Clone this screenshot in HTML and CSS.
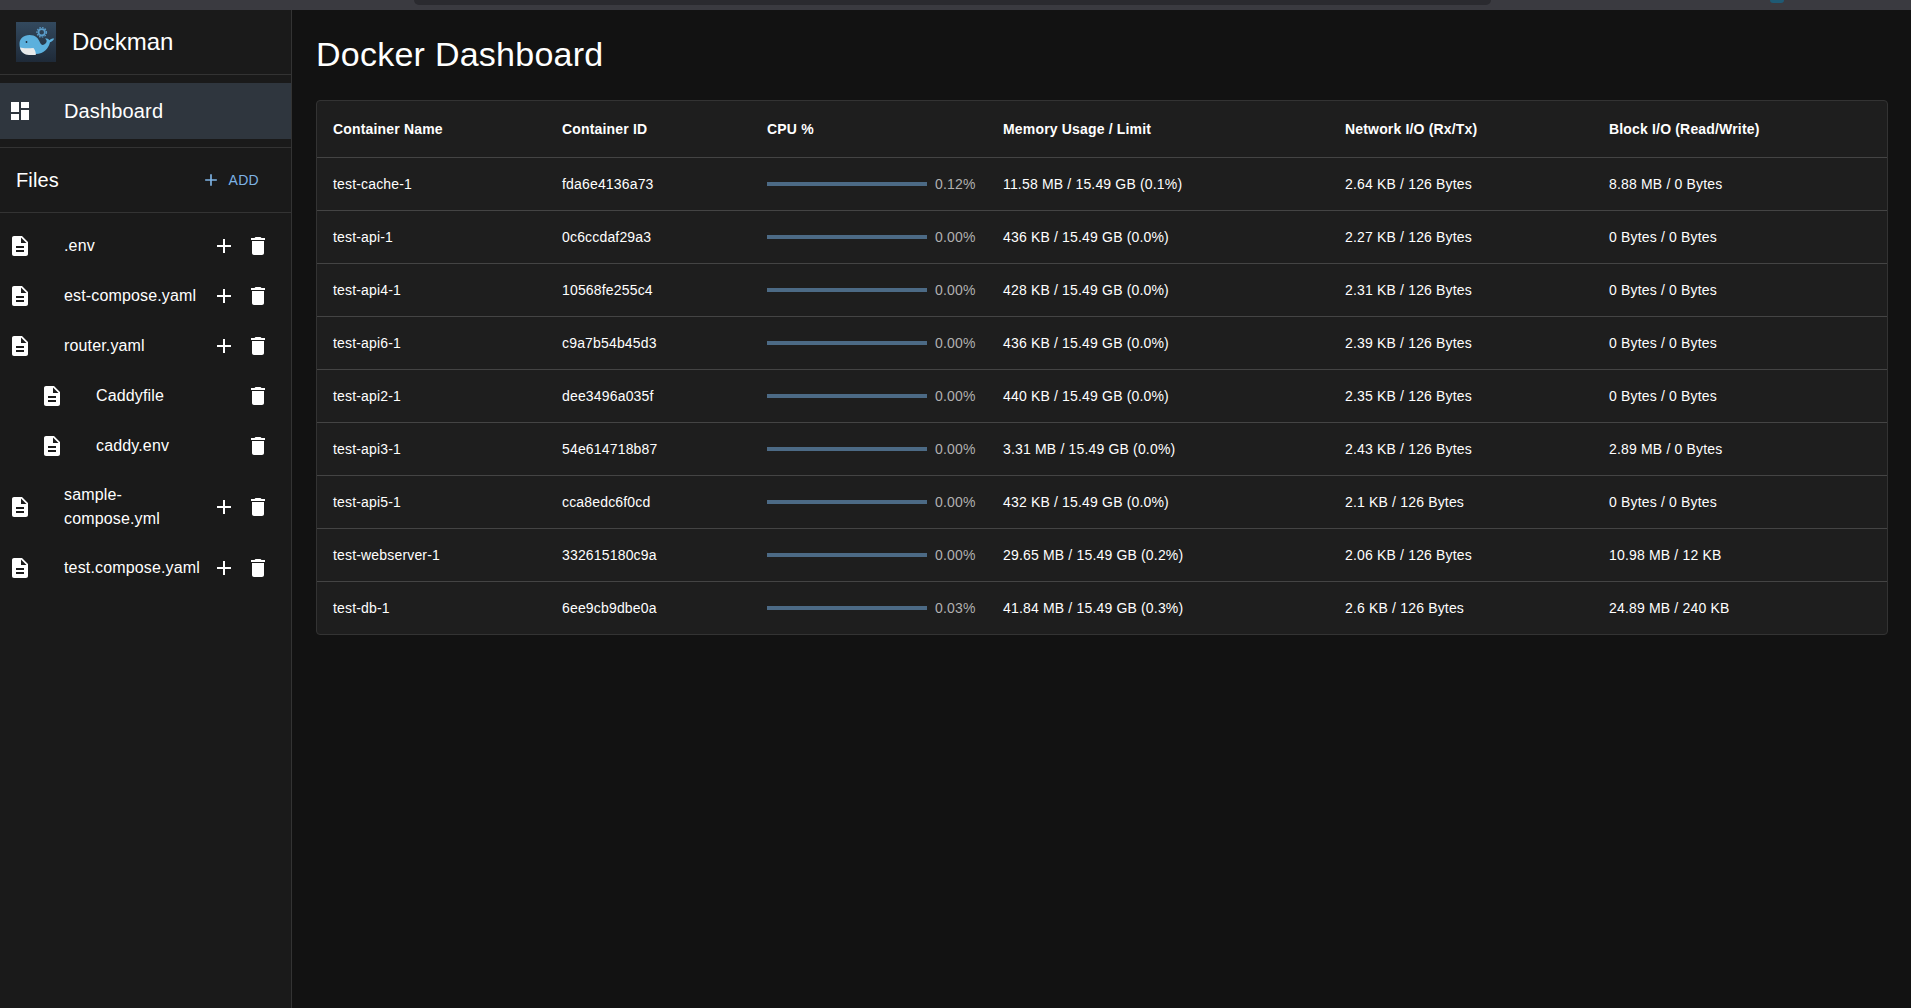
FILE: index.html
```html
<!DOCTYPE html>
<html lang="en">
<head>
<meta charset="utf-8">
<title>Dockman</title>
<link rel="stylesheet" href="styles.css">
</head>
<body>
<svg class="sprite" aria-hidden="true">
  <symbol id="i-dash" viewBox="0 0 24 24"><path d="M3 13h8V3H3v10zm0 8h8v-6H3v6zm10 0h8V11h-8v10zm0-18v6h8V3h-8z"/></symbol>
  <symbol id="i-file" viewBox="0 0 24 24"><path d="M14 2H6c-1.1 0-1.99.9-1.99 2L4 20c0 1.1.89 2 1.99 2H18c1.1 0 2-.9 2-2V8l-6-6zm2 16H8v-2h8v2zm0-4H8v-2h8v2zm-3-5V3.5L18.5 9H13z"/></symbol>
  <symbol id="i-add" viewBox="0 0 24 24"><path d="M19 13h-6v6h-2v-6H5v-2h6V5h2v6h6v2z"/></symbol>
  <symbol id="i-del" viewBox="0 0 24 24"><path d="M6 19c0 1.1.9 2 2 2h8c1.1 0 2-.9 2-2V7H6v12zM19 4h-3.5l-1-1h-5l-1 1H5v2h14V4z"/></symbol>
</svg>
<div class="browser-strip"><div class="browser-bar"></div><div class="browser-dot"></div></div>
<div class="app">
  <aside class="sidebar">
    <div class="brand">
      <svg class="logo" viewBox="0 0 40 40">
        <defs><linearGradient id="lg" x1="0" y1="0" x2="0" y2="1"><stop offset="0" stop-color="#33495e"/><stop offset="1" stop-color="#1f2a38"/></linearGradient></defs>
        <rect width="40" height="40" fill="url(#lg)"/>
        <g fill="none" stroke="#5a9cc9"><circle cx="25.7" cy="10.3" r="3.2" stroke-width="1.8"/><circle cx="25.7" cy="10.3" r="4.8" stroke-width="1.2" stroke-dasharray="1.6 1.2"/></g>
        <path d="M3.5 22c0-5.5 4-9 10-9 6 0 9 3.5 10.5 7.5 1.2 3 3.5 3 5.5 1 .8-.8 1.2-1.8 1.2-2.8l-1.5-2.4c2 .2 3.5.8 4.3 1.9.8-1 2.3-1.6 4.7-1.6-1 2.2-2.5 3.2-4.2 3.6-1.5 5.8-5.5 11.8-14.5 11.8H13C7.5 33 3.5 29 3.5 22z" fill="#5cb0dd"/>
        <path d="M4 25.5c3 1 9.3.8 13.5.4 1.5 2 2.5 4.5 2.3 7.1H13c-4.5 0-8-2.8-9-7.5z" fill="#e9eaea"/>
        <circle cx="10.5" cy="20" r=".9" fill="#1f2a38"/>
      </svg>
      <span class="brand-name">Dockman</span>
    </div>
    <div class="nav">
      <a class="nav-item"><svg class="icon"><use href="#i-dash"/></svg><span>Dashboard</span></a>
    </div>
    <div class="files-head">
      <span class="files-title">Files</span>
      <button class="add-btn"><svg class="icon-sm"><use href="#i-add"/></svg><span>ADD</span></button>
    </div>
    <ul class="file-list">
      <li class="file"><svg class="icon"><use href="#i-file"/></svg><span class="file-name">.env</span><span class="actions"><span class="act"><svg class="icon"><use href="#i-add"/></svg></span><span class="act"><svg class="icon"><use href="#i-del"/></svg></span></span></li>
      <li class="file"><svg class="icon"><use href="#i-file"/></svg><span class="file-name">est-compose.yaml</span><span class="actions"><span class="act"><svg class="icon"><use href="#i-add"/></svg></span><span class="act"><svg class="icon"><use href="#i-del"/></svg></span></span></li>
      <li class="file"><svg class="icon"><use href="#i-file"/></svg><span class="file-name">router.yaml</span><span class="actions"><span class="act"><svg class="icon"><use href="#i-add"/></svg></span><span class="act"><svg class="icon"><use href="#i-del"/></svg></span></span></li>
      <li class="file nested"><svg class="icon"><use href="#i-file"/></svg><span class="file-name">Caddyfile</span><span class="actions"><span class="act"><svg class="icon"><use href="#i-del"/></svg></span></span></li>
      <li class="file nested"><svg class="icon"><use href="#i-file"/></svg><span class="file-name">caddy.env</span><span class="actions"><span class="act"><svg class="icon"><use href="#i-del"/></svg></span></span></li>
      <li class="file"><svg class="icon"><use href="#i-file"/></svg><span class="file-name">sample-compose.yml</span><span class="actions"><span class="act"><svg class="icon"><use href="#i-add"/></svg></span><span class="act"><svg class="icon"><use href="#i-del"/></svg></span></span></li>
      <li class="file"><svg class="icon"><use href="#i-file"/></svg><span class="file-name">test.compose.yaml</span><span class="actions"><span class="act"><svg class="icon"><use href="#i-add"/></svg></span><span class="act"><svg class="icon"><use href="#i-del"/></svg></span></span></li>
    </ul>
  </aside>
  <main class="main">
    <h1 class="title">Docker Dashboard</h1>
    <div class="table-wrap">
      <table class="stats">
        <colgroup><col class="c1"><col class="c2"><col class="c3"><col class="c4"><col class="c5"><col class="c6"></colgroup>
        <thead><tr><th>Container Name</th><th>Container ID</th><th>CPU %</th><th>Memory Usage / Limit</th><th>Network I/O (Rx/Tx)</th><th>Block I/O (Read/Write)</th></tr></thead>
        <tbody>
          <tr><td>test-cache-1</td><td>fda6e4136a73</td><td><div class="cpu"><div class="bar"></div><span class="pct">0.12%</span></div></td><td>11.58 MB / 15.49 GB (0.1%)</td><td>2.64 KB / 126 Bytes</td><td>8.88 MB / 0 Bytes</td></tr>
          <tr><td>test-api-1</td><td>0c6ccdaf29a3</td><td><div class="cpu"><div class="bar"></div><span class="pct">0.00%</span></div></td><td>436 KB / 15.49 GB (0.0%)</td><td>2.27 KB / 126 Bytes</td><td>0 Bytes / 0 Bytes</td></tr>
          <tr><td>test-api4-1</td><td>10568fe255c4</td><td><div class="cpu"><div class="bar"></div><span class="pct">0.00%</span></div></td><td>428 KB / 15.49 GB (0.0%)</td><td>2.31 KB / 126 Bytes</td><td>0 Bytes / 0 Bytes</td></tr>
          <tr><td>test-api6-1</td><td>c9a7b54b45d3</td><td><div class="cpu"><div class="bar"></div><span class="pct">0.00%</span></div></td><td>436 KB / 15.49 GB (0.0%)</td><td>2.39 KB / 126 Bytes</td><td>0 Bytes / 0 Bytes</td></tr>
          <tr><td>test-api2-1</td><td>dee3496a035f</td><td><div class="cpu"><div class="bar"></div><span class="pct">0.00%</span></div></td><td>440 KB / 15.49 GB (0.0%)</td><td>2.35 KB / 126 Bytes</td><td>0 Bytes / 0 Bytes</td></tr>
          <tr><td>test-api3-1</td><td>54e614718b87</td><td><div class="cpu"><div class="bar"></div><span class="pct">0.00%</span></div></td><td>3.31 MB / 15.49 GB (0.0%)</td><td>2.43 KB / 126 Bytes</td><td>2.89 MB / 0 Bytes</td></tr>
          <tr><td>test-api5-1</td><td>cca8edc6f0cd</td><td><div class="cpu"><div class="bar"></div><span class="pct">0.00%</span></div></td><td>432 KB / 15.49 GB (0.0%)</td><td>2.1 KB / 126 Bytes</td><td>0 Bytes / 0 Bytes</td></tr>
          <tr><td>test-webserver-1</td><td>332615180c9a</td><td><div class="cpu"><div class="bar"></div><span class="pct">0.00%</span></div></td><td>29.65 MB / 15.49 GB (0.2%)</td><td>2.06 KB / 126 Bytes</td><td>10.98 MB / 12 KB</td></tr>
          <tr><td>test-db-1</td><td>6ee9cb9dbe0a</td><td><div class="cpu"><div class="bar"></div><span class="pct">0.03%</span></div></td><td>41.84 MB / 15.49 GB (0.3%)</td><td>2.6 KB / 126 Bytes</td><td>24.89 MB / 240 KB</td></tr>
        </tbody>
      </table>
    </div>
  </main>
</div>
</body>
</html>
```

FILE: styles.css
```css
* { box-sizing: border-box; }
html, body { height: 100%; }
body {
  margin: 0;
  background: #121212;
  color: #fff;
  font-family: "Liberation Sans", Arial, sans-serif;
  font-size: 16px;
  line-height: 1.5;
  letter-spacing: 0.15px;
  overflow: hidden;
  display: flex;
  flex-direction: column;
}
.sprite { display: none; }
.browser-strip {
  flex: 0 0 10px;
  background: #3a3a40;
  display: flex;
  padding: 0 127px 0 414px;
  gap: 279px;
}
.browser-bar {
  flex: 1;
  height: 5px;
  background: #2a2a2f;
  border-radius: 0 0 8px 8px;
}
.browser-dot { width: 14px; height: 3px; background: #1f5a74; border-radius: 0 0 5px 5px; }
.app { flex: 1; display: flex; min-height: 0; }
.sidebar {
  flex: 0 0 292px;
  background: #1a1a1a;
  border-right: 1px solid #333;
  display: flex;
  flex-direction: column;
}
.brand {
  height: 65px;
  padding: 0 16px;
  display: flex;
  align-items: center;
  gap: 16px;
  border-bottom: 1px solid #333;
}
.logo { width: 40px; height: 40px; flex: none; }
.brand-name { font-size: 24px; line-height: 1.2; letter-spacing: 0; }
.nav { padding: 8px 0; border-bottom: 1px solid #333; }
.nav-item {
  height: 56px;
  padding-left: 8px;
  display: flex;
  align-items: center;
  gap: 32px;
  background: #2f363e;
  font-size: 20px;
}
.icon { width: 24px; height: 24px; fill: #fff; flex: none; display: block; }
.icon-sm { width: 20px; height: 20px; fill: currentColor; display: block; }
.files-head {
  height: 65px;
  padding: 0 16px;
  display: flex;
  align-items: center;
  justify-content: space-between;
  border-bottom: 1px solid #333;
}
.files-title { font-size: 20px; }
.add-btn {
  border: 0;
  background: none;
  color: #7eb3e4;
  font: 14px "Liberation Sans", Arial, sans-serif;
  letter-spacing: 0.3px;
  display: flex;
  align-items: center;
  gap: 8px;
  padding: 0 16px 0 8px;
}
.file-list { list-style: none; margin: 0; padding: 8px 0; }
.file {
  display: flex;
  align-items: center;
  padding: 8px 16px 8px 8px;
}
.file.nested { padding-left: 40px; }
.file-name { flex: 1; min-width: 0; margin: 4px 0 4px 32px; }
.actions { display: flex; flex: none; }
.act { width: 34px; height: 34px; padding: 5px; display: block; }
.main { flex: 1; min-width: 0; padding: 0 23px 0 24px; }
.title {
  margin: 24px 0 24px;
  font-size: 34px;
  font-weight: 400;
  line-height: 1.235;
  letter-spacing: 0.25px;
}
.table-wrap {
  background: #1e1e1e;
  border: 1px solid #333;
  border-radius: 4px;
  overflow: hidden;
}
.stats { width: 100%; border-collapse: collapse; table-layout: fixed; font-size: 14px; line-height: 20px; letter-spacing: 0.17px; }
.c1 { width: 229px; } .c2 { width: 205px; } .c3 { width: 236px; }
.c4 { width: 342px; } .c5 { width: 264px; } .c6 { width: 294px; }
.stats th { text-align: left; font-weight: 700; padding: 18px 16px; border-bottom: 1px solid #444; }
.stats td { padding: 16px; border-bottom: 1px solid #444; }
.stats tbody tr:last-child td { border-bottom: 0; }
.cpu { display: flex; align-items: center; gap: 8px; }
.bar { width: 160px; height: 4px; background: #4c6a85; flex: none; }
.pct { color: #b0b0b0; }
```
